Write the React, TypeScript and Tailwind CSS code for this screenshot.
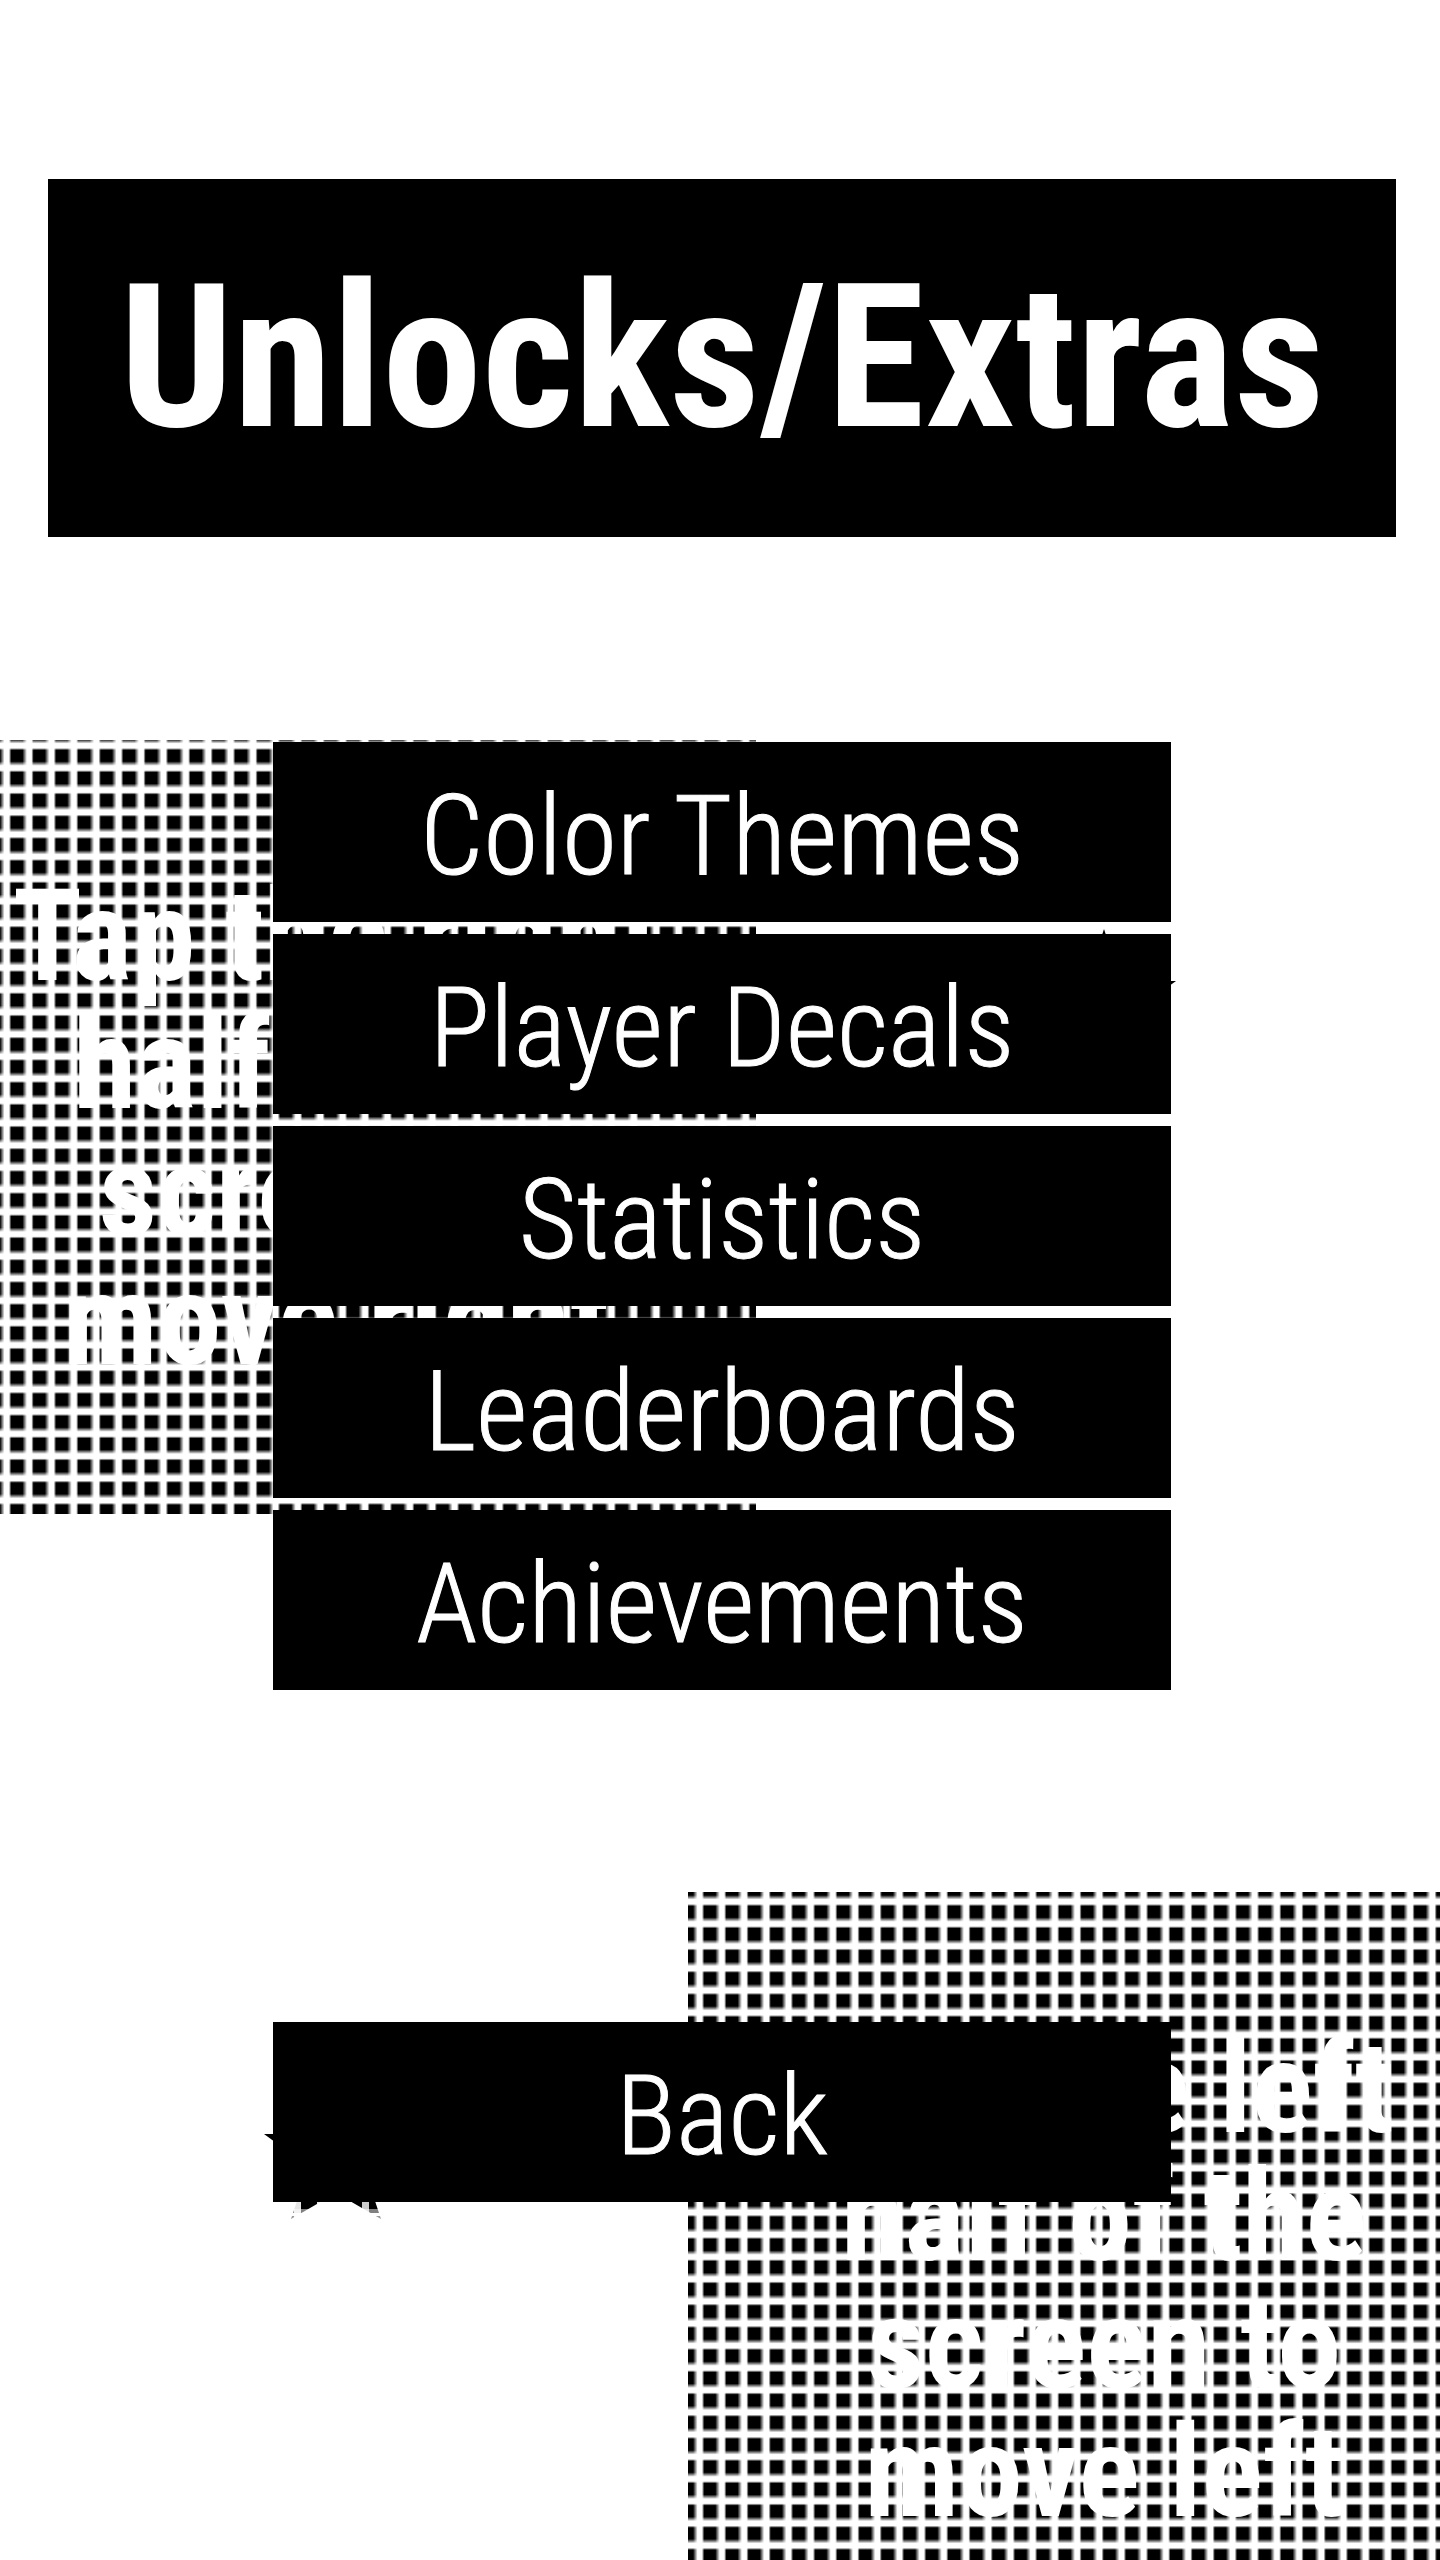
const menuItems = ["Color Themes", "Player Decals", "Statistics", "Leaderboards", "Achievements"];

const leftHint = ["Tap the right", "half of the", "screen to", "move right"];
const rightHint = ["Tap the left", "half of the", "screen to", "move left"];

/* One tile of the soft-edged mesh holds five cells in each direction. */
const mesh =
  "bg-black bg-[repeating-linear-gradient(to_right,#fff_0%,transparent_2%,transparent_12%,#fff_16%,#fff_20%),repeating-linear-gradient(to_bottom,#fff_0%,transparent_2%,transparent_12%,#fff_16%,#fff_20%)]";

function MenuButton({ label }: { label: string }) {
  return (
    <button
      type="button"
      className="w-full cursor-pointer bg-black pt-[38px] pb-[30px] text-center text-[112px] leading-28 font-light text-white [-webkit-text-stroke:1px_white]"
    >
      {label}
    </button>
  );
}

function Hint({ lines, className }: { lines: string[]; className: string }) {
  return (
    <p className={`text-center text-[128px] leading-[128px] font-bold whitespace-nowrap text-white ${className}`}>
      {lines.map((line) => (
        <span key={line} className="block">
          {line}
        </span>
      ))}
    </p>
  );
}

function Star({ className, grid }: { className: string; grid?: boolean }) {
  return (
    <svg aria-hidden="true" viewBox="0 0 144 137" className={`h-[137px] w-36 shrink-0 ${className}`}>
      <path d="M72 0 89 52H144L99.500 84.500 117 137 72 111 27 137 44.500 84.500 0 52H55Z" fill="#000" />
      {grid && (
        <g fill="#fff">
          <rect x="30" y="118" width="7" height="19" opacity="0.9" />
          <rect x="53" y="118" width="7" height="19" opacity="0.9" />
          <rect x="98" y="118" width="7" height="19" opacity="0.8" />
          <rect x="24" y="127" width="96" height="4" opacity="0.5" />
          <rect x="24" y="131" width="96" height="3" />
          <rect x="24" y="134" width="96" height="3" opacity="0.6" />
        </g>
      )}
    </svg>
  );
}

function Backdrop() {
  return (
    <div className="absolute inset-0 -z-10 flex flex-col gap-[378px] overflow-hidden pt-[740px]">
      <div className="flex items-start gap-[276px]">
        <div
          className={`h-[774px] w-[756px] shrink-0 overflow-hidden bg-size-[112px_111px] bg-position-[9px_8px] pt-33 pr-21 ${mesh}`}
        >
          <Hint lines={leftHint} className="" />
        </div>
        <Star className="mt-[189px]" />
      </div>
      <div className="flex grow items-stretch justify-between">
        <Star className="mt-[190px] ml-[264px]" grid />
        <div
          className={`w-[752px] shrink-0 overflow-hidden bg-size-[111px_111px] bg-position-[14px_12px] pt-33 ${mesh}`}
        >
          <Hint lines={rightHint} className="-mr-20" />
        </div>
      </div>
    </div>
  );
}

export default function App() {
  return (
    <div className="relative isolate flex min-h-screen flex-col bg-white pt-[179px] pr-11 pb-20 pl-12 font-['Roboto_Condensed','Roboto',sans-serif]">
      <Backdrop />
      <header className="bg-black px-8 py-[79px] text-center">
        <h1 className="text-[200px] leading-[200px] font-bold text-white">Unlocks/Extras</h1>
      </header>

      <main className="flex flex-col items-center gap-[332px] pt-[205px]">
        <nav aria-label="Unlocks and extras" className="w-2/3">
          <ul className="flex flex-col gap-3">
            {menuItems.map((label) => (
              <li key={label} className="flex">
                <MenuButton label={label} />
              </li>
            ))}
          </ul>
        </nav>
        <div className="flex w-2/3">
          <MenuButton label="Back" />
        </div>
      </main>
    </div>
  );
}
